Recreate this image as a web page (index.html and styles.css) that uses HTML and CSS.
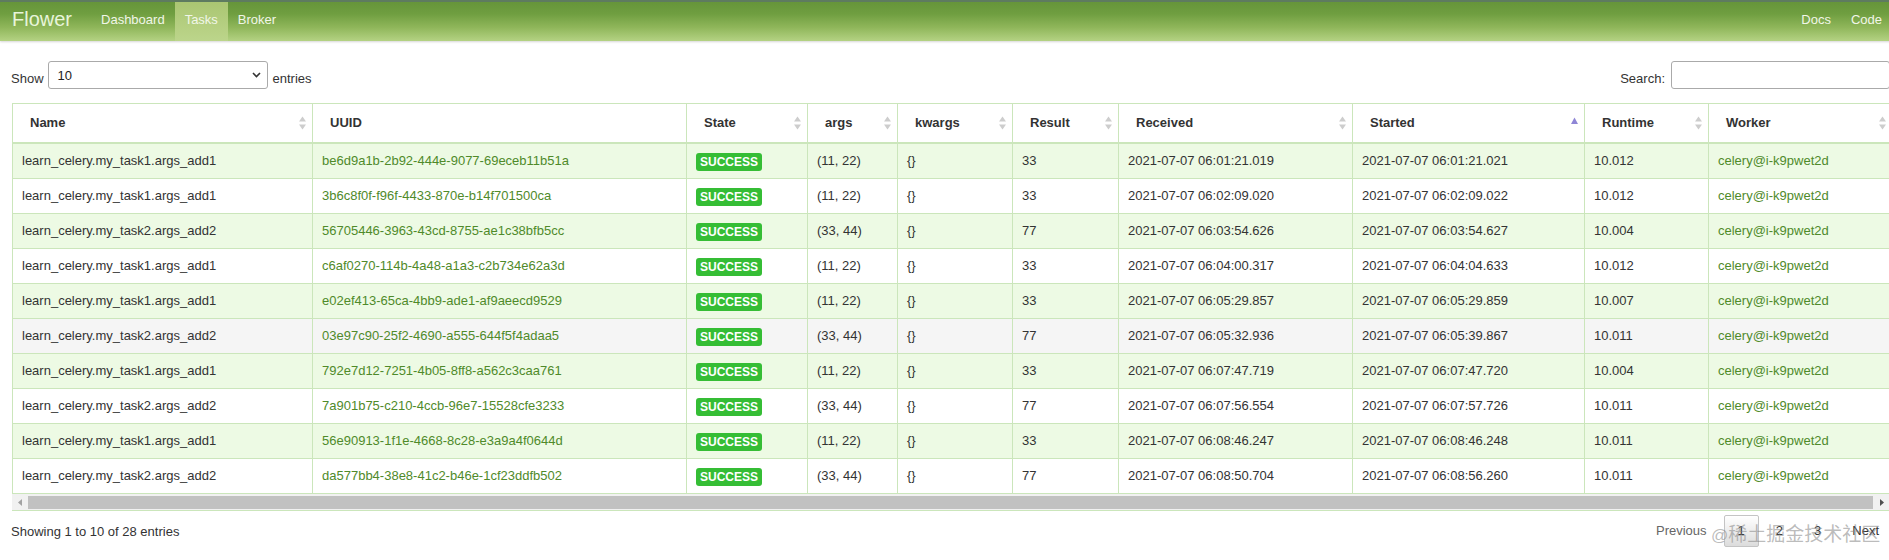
FILE: index.html
```html
<!DOCTYPE html>
<html lang="en">
<head>
<meta charset="utf-8">
<title>Flower - Tasks</title>
<link rel="stylesheet" href="styles.css">
</head>
<body>
<nav class="navbar">
  <span class="brand">Flower</span>
  <a class="nav-link" href="#">Dashboard</a>
  <a class="nav-link active" href="#">Tasks</a>
  <a class="nav-link" href="#">Broker</a>
  <div class="nav-right">
    <a class="nav-link" href="#">Docs</a>
    <a class="nav-link" href="#">Code</a>
  </div>
</nav>

<div class="page">
  <div class="controls">
    <div class="length">
      <span class="lbl">Show</span>
      <div class="select"><span>10</span><svg class="chev" width="9" height="6" viewBox="0 0 9 6"><path d="M1 1 L4.5 4.6 L8 1" fill="none" stroke="#333" stroke-width="1.6"/></svg></div>
      <span class="lbl">entries</span>
    </div>
    <div class="search">
      <span class="lbl">Search:</span>
      <div class="search-input"></div>
    </div>
  </div>

  <div class="table-wrap">
    <div class="table-clip">
      <table>
        <thead>
          <tr>
            <th class="c-name"><div class="th-inner"><span>Name</span><svg class="sort" width="7" height="14" viewBox="0 0 7 14"><polygon points="0,5.5 3.5,0.5 7,5.5"/><polygon points="0,8.5 3.5,13.5 7,8.5"/></svg></div></th>
            <th class="c-uuid"><div class="th-inner"><span>UUID</span></div></th>
            <th class="c-state"><div class="th-inner"><span>State</span><svg class="sort" width="7" height="14" viewBox="0 0 7 14"><polygon points="0,5.5 3.5,0.5 7,5.5"/><polygon points="0,8.5 3.5,13.5 7,8.5"/></svg></div></th>
            <th class="c-args"><div class="th-inner"><span>args</span><svg class="sort" width="7" height="14" viewBox="0 0 7 14"><polygon points="0,5.5 3.5,0.5 7,5.5"/><polygon points="0,8.5 3.5,13.5 7,8.5"/></svg></div></th>
            <th class="c-kwargs"><div class="th-inner"><span>kwargs</span><svg class="sort" width="7" height="14" viewBox="0 0 7 14"><polygon points="0,5.5 3.5,0.5 7,5.5"/><polygon points="0,8.5 3.5,13.5 7,8.5"/></svg></div></th>
            <th class="c-result"><div class="th-inner"><span>Result</span><svg class="sort" width="7" height="14" viewBox="0 0 7 14"><polygon points="0,5.5 3.5,0.5 7,5.5"/><polygon points="0,8.5 3.5,13.5 7,8.5"/></svg></div></th>
            <th class="c-received"><div class="th-inner"><span>Received</span><svg class="sort" width="7" height="14" viewBox="0 0 7 14"><polygon points="0,5.5 3.5,0.5 7,5.5"/><polygon points="0,8.5 3.5,13.5 7,8.5"/></svg></div></th>
            <th class="c-started"><div class="th-inner"><span>Started</span><svg class="sort-asc" width="7" height="14" viewBox="0 0 7 14"><polygon points="0,8 3.5,1.5 7,8"/></svg></div></th>
            <th class="c-runtime"><div class="th-inner"><span>Runtime</span><svg class="sort" width="7" height="14" viewBox="0 0 7 14"><polygon points="0,5.5 3.5,0.5 7,5.5"/><polygon points="0,8.5 3.5,13.5 7,8.5"/></svg></div></th>
            <th class="c-worker"><div class="th-inner"><span>Worker</span><svg class="sort" width="7" height="14" viewBox="0 0 7 14"><polygon points="0,5.5 3.5,0.5 7,5.5"/><polygon points="0,8.5 3.5,13.5 7,8.5"/></svg></div></th>
          </tr>
        </thead>
        <tbody>
          <tr class="odd">
            <td>learn_celery.my_task1.args_add1</td><td class="link">be6d9a1b-2b92-444e-9077-69eceb11b51a</td><td><span class="badge">SUCCESS</span></td><td>(11, 22)</td><td>{}</td><td>33</td><td>2021-07-07 06:01:21.019</td><td>2021-07-07 06:01:21.021</td><td>10.012</td><td class="link">celery@i-k9pwet2d</td>
          </tr>
          <tr>
            <td>learn_celery.my_task1.args_add1</td><td class="link">3b6c8f0f-f96f-4433-870e-b14f701500ca</td><td><span class="badge">SUCCESS</span></td><td>(11, 22)</td><td>{}</td><td>33</td><td>2021-07-07 06:02:09.020</td><td>2021-07-07 06:02:09.022</td><td>10.012</td><td class="link">celery@i-k9pwet2d</td>
          </tr>
          <tr class="odd">
            <td>learn_celery.my_task2.args_add2</td><td class="link">56705446-3963-43cd-8755-ae1c38bfb5cc</td><td><span class="badge">SUCCESS</span></td><td>(33, 44)</td><td>{}</td><td>77</td><td>2021-07-07 06:03:54.626</td><td>2021-07-07 06:03:54.627</td><td>10.004</td><td class="link">celery@i-k9pwet2d</td>
          </tr>
          <tr>
            <td>learn_celery.my_task1.args_add1</td><td class="link">c6af0270-114b-4a48-a1a3-c2b734e62a3d</td><td><span class="badge">SUCCESS</span></td><td>(11, 22)</td><td>{}</td><td>33</td><td>2021-07-07 06:04:00.317</td><td>2021-07-07 06:04:04.633</td><td>10.012</td><td class="link">celery@i-k9pwet2d</td>
          </tr>
          <tr class="odd">
            <td>learn_celery.my_task1.args_add1</td><td class="link">e02ef413-65ca-4bb9-ade1-af9aeecd9529</td><td><span class="badge">SUCCESS</span></td><td>(11, 22)</td><td>{}</td><td>33</td><td>2021-07-07 06:05:29.857</td><td>2021-07-07 06:05:29.859</td><td>10.007</td><td class="link">celery@i-k9pwet2d</td>
          </tr>
          <tr class="hover">
            <td>learn_celery.my_task2.args_add2</td><td class="link">03e97c90-25f2-4690-a555-644f5f4adaa5</td><td><span class="badge">SUCCESS</span></td><td>(33, 44)</td><td>{}</td><td>77</td><td>2021-07-07 06:05:32.936</td><td>2021-07-07 06:05:39.867</td><td>10.011</td><td class="link">celery@i-k9pwet2d</td>
          </tr>
          <tr class="odd">
            <td>learn_celery.my_task1.args_add1</td><td class="link">792e7d12-7251-4b05-8ff8-a562c3caa761</td><td><span class="badge">SUCCESS</span></td><td>(11, 22)</td><td>{}</td><td>33</td><td>2021-07-07 06:07:47.719</td><td>2021-07-07 06:07:47.720</td><td>10.004</td><td class="link">celery@i-k9pwet2d</td>
          </tr>
          <tr>
            <td>learn_celery.my_task2.args_add2</td><td class="link">7a901b75-c210-4ccb-96e7-15528cfe3233</td><td><span class="badge">SUCCESS</span></td><td>(33, 44)</td><td>{}</td><td>77</td><td>2021-07-07 06:07:56.554</td><td>2021-07-07 06:07:57.726</td><td>10.011</td><td class="link">celery@i-k9pwet2d</td>
          </tr>
          <tr class="odd">
            <td>learn_celery.my_task1.args_add1</td><td class="link">56e90913-1f1e-4668-8c28-e3a9a4f0644d</td><td><span class="badge">SUCCESS</span></td><td>(11, 22)</td><td>{}</td><td>33</td><td>2021-07-07 06:08:46.247</td><td>2021-07-07 06:08:46.248</td><td>10.011</td><td class="link">celery@i-k9pwet2d</td>
          </tr>
          <tr>
            <td>learn_celery.my_task2.args_add2</td><td class="link">da577bb4-38e8-41c2-b46e-1cf23ddfb502</td><td><span class="badge">SUCCESS</span></td><td>(33, 44)</td><td>{}</td><td>77</td><td>2021-07-07 06:08:50.704</td><td>2021-07-07 06:08:56.260</td><td>10.011</td><td class="link">celery@i-k9pwet2d</td>
          </tr>
        </tbody>
      </table>
    </div>
    <div class="hscroll">
      <div class="sb-btn"><svg width="4" height="7" viewBox="0 0 4 7"><polygon points="4,0 0,3.5 4,7" fill="#a3a3a3"/></svg></div>
      <div class="sb-thumb"></div>
      <div class="sb-btn"><svg width="4" height="7" viewBox="0 0 4 7"><polygon points="0,0 4,3.5 0,7" fill="#505050"/></svg></div>
    </div>
  </div>

  <div class="footer">
    <div class="info">Showing 1 to 10 of 28 entries</div>
    <div class="pagination">
      <span class="pg disabled">Previous</span>
      <span class="pg current">1</span>
      <span class="pg">2</span>
      <span class="pg">3</span>
      <span class="pg">Next</span>
    </div>
  </div>
</div>

<div class="watermark"><span class="wm-at">@</span>稀土掘金技术社区</div>
</body>
</html>
```
FILE: styles.css
```css
* { box-sizing: border-box; }

html, body {
  margin: 0;
  padding: 0;
  overflow: hidden;
  background: #fff;
}

body {
  font-family: "Liberation Sans", Arial, sans-serif;
  font-size: 13px;
  color: #333;
  width: 1889px;
  height: 560px;
  position: relative;
}

/* ---------- navbar ---------- */
.navbar {
  display: flex;
  width: 1892px;
  height: 41px;
  border-top: 2px solid #5e7b60;
  background: linear-gradient(to bottom, #66953a 0%, #6f9e40 30%, #8fb65a 65%, #b4d283 100%);
  box-shadow: 0 1px 2px rgba(0, 0, 0, 0.16);
}

.brand {
  padding: 0 19px 0 12px;
  font-size: 20px;
  line-height: 34px;
  color: #e8f5da;
}

.nav-link {
  display: block;
  padding: 0 10px 3px;
  line-height: 36px;
  color: #f1f6e8;
  text-decoration: none;
}

.nav-link.active {
  background: linear-gradient(to bottom, #aac672, #bcd58b);
}

.nav-right {
  margin-left: auto;
  display: flex;
}

/* ---------- page ---------- */
.page {
  width: 1879px;
  margin-left: 11px;
}

.controls {
  display: flex;
  justify-content: space-between;
  align-items: center;
  height: 28px;
  margin-top: 20px;
}

.length, .search {
  display: flex;
  align-items: center;
}

.lbl { margin-top: 7px; }

.select {
  width: 220px;
  height: 28px;
  margin: 0 5px 0 4px;
  border: 1px solid #aaa;
  border-radius: 3px;
  background: #fff;
  display: flex;
  align-items: center;
  justify-content: space-between;
  padding: 0 6px 0 9px;
  color: #222;
}

.chev { display: block; }

.search-input {
  width: 219px;
  height: 28px;
  margin-left: 6px;
  border: 1px solid #aaa;
  border-radius: 3px;
  background: #fff;
}

/* ---------- table ---------- */
.table-wrap {
  margin: 14px 0 0 1px;
  border-bottom: 1px solid #cbe6bb;
}

.table-clip { overflow: hidden; }

table {
  border-collapse: separate;
  border-spacing: 0;
  table-layout: fixed;
  width: 1881px;
  border-left: 1px solid #cbe6bb;
  border-top: 1px solid #cbe6bb;
}

th, td {
  border-right: 1px solid #cbe6bb;
  white-space: nowrap;
  overflow: hidden;
  text-align: left;
}

th {
  padding: 0 6px 0 17px;
  line-height: 38px;
  border-bottom: 2px solid #cbe6bb;
  font-weight: bold;
  color: #333;
  background: #fff;
}

.th-inner {
  display: flex;
  align-items: center;
  justify-content: space-between;
  height: 38px;
}

.sort { display: block; fill: #cdcdcd; }
.sort-asc { display: block; fill: #8f86d6; }

td {
  padding: 0 9px;
  line-height: 34px;
  border-bottom: 1px solid #cbe6bb;
}

.c-name { width: 300px; }
.c-uuid { width: 374px; }
.c-state { width: 121px; }
.c-args { width: 90px; }
.c-kwargs { width: 115px; }
.c-result { width: 106px; }
.c-received { width: 234px; }
.c-started { width: 232px; }
.c-runtime { width: 124px; }
.c-worker { width: 184px; }

tr.odd td { background: #edfae4; }
tr.hover td { background: #f5f5f5; }

td.link { color: #4f8a2a; }

.badge {
  display: inline-block;
  vertical-align: middle;
  height: 18px;
  line-height: 18px;
  padding: 0 4px;
  border-radius: 3px;
  background: #35bd35;
  color: #fff;
  font-size: 12px;
  font-weight: bold;
}

/* ---------- fake horizontal scrollbar ---------- */
.hscroll {
  display: flex;
  height: 16px;
  background: #f1f1f1;
}

.sb-btn {
  width: 16px;
  display: flex;
  align-items: center;
  justify-content: center;
}

.sb-btn svg { display: block; }

.sb-thumb {
  flex: 1;
  margin: 2px 1px 1px 0;
  background: #c1c1c1;
}

/* ---------- footer ---------- */
.footer {
  display: flex;
  justify-content: space-between;
  align-items: center;
  padding-top: 4px;
}

.pagination {
  display: flex;
  gap: 3px;
  margin-right: -3px;
}

.pg {
  height: 32px;
  line-height: 30px;
  padding: 0 13px;
  border: 1px solid transparent;
  border-radius: 2px;
  color: #333;
}

.pg.disabled { color: #666; }

.pg.current {
  border-color: #c4c4c4;
  background: linear-gradient(to bottom, #fff, #dcdcdc);
}

/* ---------- watermark overlay ---------- */
.watermark {
  position: absolute;
  left: 1711px;
  top: 523px;
  font-family: "Noto Sans CJK SC", sans-serif;
  font-size: 19px;
  line-height: 19px;
  color: rgba(130, 130, 130, 0.55);
  white-space: nowrap;
}

.wm-at {
  font-family: "Liberation Sans", sans-serif;
  font-size: 17px;
}
```
